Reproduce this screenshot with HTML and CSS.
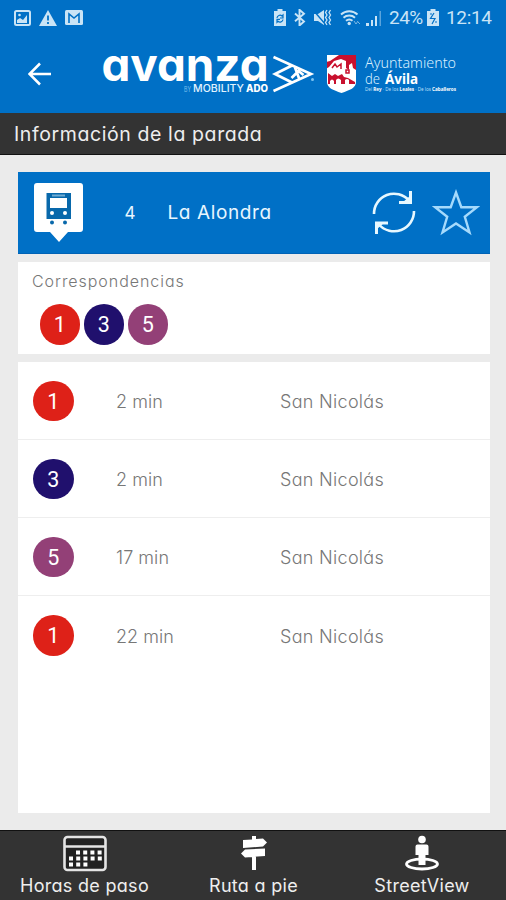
FILE: index.html
```html
<!DOCTYPE html>
<html lang="es">
<head>
<meta charset="utf-8">
<title>Información de la parada</title>
<link rel="stylesheet" href="styles.css">
</head>
<body>
<div class="app">
  <header class="top">
    <div class="status">
      <div class="status-left">
        <svg width="17" height="16" viewBox="0 0 17 16"><rect x="1" y="1" width="15" height="14" rx="1.5" fill="none" stroke="currentColor" stroke-width="2"/><path d="M3 13V10l3-2 3 2 4-5v8z" fill="currentColor"/><circle cx="5.5" cy="5" r="1.3" fill="currentColor"/></svg>
        <svg width="18" height="16" viewBox="0 0 18 16"><path d="M9 0l9 16H0z" fill="currentColor"/><path d="M9 5.5v5M9 12v2" stroke="#0070c6" stroke-width="1.8"/></svg>
        <svg width="18" height="15" viewBox="0 0 18 15"><rect x="0" y="0" width="18" height="15" rx="1.5" fill="currentColor"/><path d="M4 13V4l5 4 5-4v9" fill="none" stroke="#0070c6" stroke-width="1.6"/></svg>
      </div>
      <div class="status-right">
        <svg width="12" height="17" viewBox="0 0 12 17"><path d="M3.5 0h5v2H12v15H0V2h3.500z" fill="currentColor"/><path d="M3 9a3 3 0 0 1 5-2l1-1v3H6M9 10.500a3 3 0 0 1-5 1.800l-1 1v-3h3" fill="none" stroke="#0070c6" stroke-width="1.2"/></svg>
        <svg class="bt" width="12" height="17" viewBox="0 0 12 17"><path d="M1 4.500l9 8-4.500 4V.8L10 4.700l-9 7.500" fill="none" stroke="currentColor" stroke-width="1.900"/></svg>
        <svg class="mute" width="19" height="17" viewBox="0 0 19 17"><path d="M1 5h4l6-4v15l-6-4H1z" fill="currentColor"/><path d="M0 1l13 15" stroke="#0070c6" stroke-width="1.400"/><path d="M14 1l-1.500 2.500L14 6l-1.500 2.500L14 11l-1.500 2.500L14 16M17.500 1L16 3.500 17.500 6 16 8.500l1.500 2.500-1.500 2.500 1.500 2.500" fill="none" stroke="currentColor" stroke-width="1.300"/></svg>
        <svg class="wifi" width="21" height="17" viewBox="0 0 21 17"><path d="M1 5.500a12 12 0 0 1 16.500 0M3.500 8.800a8.500 8.500 0 0 1 11.500 0M6 11.800a5 5 0 0 1 6.500 0" fill="none" stroke="currentColor" stroke-width="1.900"/><circle cx="9.200" cy="14.500" r="1.700" fill="currentColor"/><path d="M14 12l2 3 2-3M18 13l2 2" fill="none" stroke="currentColor" stroke-width="1" opacity=".6"/></svg>
        <svg class="signal" width="17" height="16" viewBox="0 0 17 16"><path d="M1 16v-3h3v3zM6 16v-6h2v6zM10 16V6h2v10z" fill="currentColor"/><path d="M14.500 16V1H16v15z" fill="currentColor" opacity=".45"/></svg>
        <span class="pct">24%</span>
        <svg class="bat" width="12" height="17" viewBox="0 0 12 17"><path d="M3.500 0h5v2H12v15H0V2h3.500z" fill="currentColor"/><path d="M7 4L3.500 9.500H8L5 15M3 5h2M8 13h2" fill="none" stroke="#0070c6" stroke-width="1.200"/></svg>
        <span class="clock">12:14</span>
      </div>
    </div>
    <div class="brandbar">
      <svg class="back" width="24" height="24" viewBox="0 0 24 24"><path d="M23 12H2M12 1.500L1.500 12 12 22.500" fill="none" stroke="#fff" stroke-width="2.500"/></svg>
      <svg class="avanza" width="214" height="64" viewBox="0 -14 214 64">
        <text class="wordmark" x="-.5" y="31.500" textLength="167" lengthAdjust="spacingAndGlyphs">avanza</text>
        <text class="by" x="82" y="43" textLength="7" lengthAdjust="spacingAndGlyphs">BY</text>
        <text class="mobility" x="91" y="43" textLength="51" lengthAdjust="spacingAndGlyphs">MOBILITY</text>
        <text class="ado" x="144" y="43" textLength="22" lengthAdjust="spacingAndGlyphs">ADO</text>
        <path d="M171.500 8L209 25 171.500 42M190 16.500L173 25l17 8.500M193 18.500l4.500 12M189.500 29l7-7 5 4" fill="none" stroke="#fff" stroke-width="2.700"/>
        <circle cx="210.500" cy="30.500" r="1.500" fill="#7dc4f2"/>
      </svg>
      <svg class="city" width="134" height="52" viewBox="0 -10 134 52">
        <path d="M0 0h29v27c0 6-6 8-14.500 11C6 35 0 33 0 27z" fill="#fff"/>
        <path d="M12 0h17v15l-3-2-1-5-3 2v5l-3-2V6l-5-2-7 2-5 6-3 2V7l4-1z" fill="#c8102e"/>
        <path d="M1 18l4 3 3-2 3 2 4-2 2 3 4 1 7 4v2h-6v-4q-2-2-4 0v4h-4v-4q-3-3-5 0v4H7v-3q-2-3-4 0v3H1z" fill="#c8102e"/>
        <path d="M5 13l3-4 2 3 4-3v5M19 15h3v3h-3z" fill="none" stroke="#c8102e" stroke-width="1.500"/>
        <text class="city-name" x="38" y="13" textLength="91" lengthAdjust="spacingAndGlyphs">Ayuntamiento</text>
        <text class="city-name" x="38" y="28.500" textLength="15" lengthAdjust="spacingAndGlyphs">de</text>
        <text class="city-name strong" x="58" y="28.500" textLength="33" lengthAdjust="spacingAndGlyphs">Ávila</text>
        <text class="motto" x="38" y="36" textLength="91" lengthAdjust="spacingAndGlyphs">Del <tspan class="strong">Rey</tspan> · De los <tspan class="strong">Leales</tspan> · De los <tspan class="strong">Caballeros</tspan></text>
      </svg>
    </div>
  </header>
  <h1 class="title">Información de la parada</h1>
  <main class="content">
    <section class="stop">
      <svg class="pin" width="50" height="60" viewBox="0 0 50 60"><path d="M3 0h43q3 0 3 3v43q0 3-3 3H34l-9 10-9-10H3q-3 0-3-3V3q0-3 3-3z" fill="#fff"/><path d="M12.500 10h24.500v26H12.500z" fill="#0868ab"/><path d="M18 11.500h13v2H18z" fill="#73acd2"/><path d="M16 15h17v10H16z" fill="#fff"/><circle cx="18" cy="30" r="2" fill="#fff"/><circle cx="31" cy="30" r="2" fill="#fff"/><circle cx="18" cy="39.500" r="2" fill="#0868ab"/><circle cx="31" cy="39.500" r="2" fill="#0868ab"/></svg>
      <span class="stop-id">4</span>
      <span class="stop-name">La Alondra</span>
      <svg class="refresh" width="44" height="46" viewBox="0 0 44 46"><path d="M2 24A20 20 0 0 1 37 10.500M42 21A20 20 0 0 1 7 34.500" fill="none" stroke="#e7f8ff" stroke-width="2.600"/><path d="M38.500 1v11.500H27M4.500 44V33H16" fill="none" stroke="#e7f8ff" stroke-width="3"/><path d="M31 12l7-6v6zM12 33l-7 6v-6z" fill="#e7f8ff"/></svg>
      <svg class="star" width="48" height="47" viewBox="0 0 48 47"><path d="M24 3.500l5.300 14.700H45L32.800 27.800 37.500 43.500 24 34.500 10.500 43.500 15.200 27.800 3 18.200h15.700z" fill="none" stroke="#a5dafc" stroke-width="2.400"/></svg>
    </section>
    <section class="transfers">
      <h2 class="label">Correspondencias</h2>
      <div class="lines"><span class="line red">1</span><span class="line navy">3</span><span class="line purple">5</span></div>
    </section>
    <section class="arrivals">
      <div class="row"><span class="line red">1</span><span class="time">2 min</span><span class="dest">San Nicolás</span></div>
      <div class="row"><span class="line navy">3</span><span class="time">2 min</span><span class="dest">San Nicolás</span></div>
      <div class="row"><span class="line purple">5</span><span class="time">17 min</span><span class="dest">San Nicolás</span></div>
      <div class="row"><span class="line red">1</span><span class="time">22 min</span><span class="dest">San Nicolás</span></div>
    </section>
  </main>
  <nav class="tabs">
    <a class="tab hours">
      <svg width="44" height="38" viewBox="0 0 44 38"><rect x="1.500" y="2" width="41" height="33" rx="3" fill="#222" stroke="#e4e4e4" stroke-width="2.600"/><path d="M2 11.500h40" stroke="#e4e4e4" stroke-width="2.600"/><path d="M13 17.500h26M6 23.500h33M6 29.500h20" stroke="#fff" stroke-width="4" stroke-dasharray="4 3.200"/></svg>
      <span>Horas de paso</span>
    </a>
    <a class="tab walk">
      <svg width="28" height="38" viewBox="0 0 28 38"><path d="M12 1h4v3l7-.5 4 4-4 4L3 13V5l9-.5zM25 13.500V21L5 22.500l-4-4 4-4zM12 21h4v14h-4z" fill="#fff"/></svg>
      <span>Ruta a pie</span>
    </a>
    <a class="tab street">
      <svg width="38" height="38" viewBox="0 0 38 38"><ellipse cx="19" cy="29" rx="15.500" ry="5" fill="none" stroke="#fff" stroke-width="2.800"/><circle cx="19" cy="4.500" r="3.800" fill="#fff"/><path d="M14.500 9.500h9q2 0 2 2V20h-3v10h-7V20h-3v-8.500q0-2 2-2z" fill="#fff"/></svg>
      <span>StreetView</span>
    </a>
  </nav>
</div>
</body>
</html>
```

FILE: styles.css
```css
* { box-sizing: border-box; }
body { margin: 0; font-family: Inter, "Liberation Sans", sans-serif; font-feature-settings: "cv11" 1; }
svg { display: block; flex: none; }
h1, h2 { margin: 0; font-weight: 400; }
.app { width: 506px; height: 900px; display: flex; flex-direction: column; background: #ebebeb; overflow: hidden; }
.top { height: 113px; flex: none; background: #0070c6; }
.status { height: 35px; padding: 0 14px; display: flex; justify-content: space-between; align-items: center; color: #c9e4f6; }
.status-left { display: flex; gap: 8px; align-items: center; }
.status-right { display: flex; align-items: center; font: 19px/35px Roboto, sans-serif; white-space: nowrap; }
.bt { margin-left: 8px; }
.mute { margin-left: 7px; }
.wifi { margin-left: 8px; }
.signal { margin-left: 4px; }
.pct { margin-left: 7px; width: 33px; letter-spacing: -.5px; }
.bat { margin-left: 5px; }
.clock { margin-left: 7px; width: 46px; letter-spacing: -.35px; }
.brandbar { height: 78px; display: flex; align-items: flex-start; }
.back { margin: 27px 0 0 28px; }
.avanza { margin: 0 0 0 50px; }
.city { margin: 10px 0 0 11px; }
.wordmark { font-size: 45px; font-weight: 750; fill: #fff; }
.by { font-size: 7px; fill: #7dc0ee; }
.mobility { font-size: 10px; font-weight: 500; fill: #e2f3ff; }
.ado { font-size: 10px; font-weight: 800; fill: #fff; }
.city-name { font-family: "Noto Sans", sans-serif; font-size: 14.500px; font-weight: 300; fill: #d8efff; }
.motto { font-family: "Noto Sans", sans-serif; font-size: 5px; fill: #b9dff8; }
.strong { font-weight: 700; fill: #fff; }
.title { height: 42px; flex: none; padding: 1px 0 0 14px; background: #333; border-bottom: 1px solid #111; color: #eee; font-size: 19.500px; line-height: 41px; letter-spacing: .6px; }
.content { flex: 1; padding: 17px 16px 17px 17.500px; display: flex; flex-direction: column; }
.stop { height: 81.500px; flex: none; display: flex; align-items: flex-start; background: #0070c6; color: #e7f6ff; border-bottom: 1px solid #0062b5; }
.pin { margin: 11px 0 0 16px; }
.stop-id { width: 43px; margin-left: 41px; line-height: 82px; font-size: 17px; }
.stop-name { width: 204px; line-height: 82px; font-size: 19px; letter-spacing: .6px; }
.refresh { margin-top: 18px; }
.star { margin: 17px 0 0 16px; }
.transfers { height: 92px; flex: none; margin-top: 8.500px; padding: 9px 14.500px; background: #fff; }
.label { font-size: 16px; line-height: 20px; color: #777; font-weight: 300; letter-spacing: .95px; }
.lines { display: flex; gap: 3.500px; padding: 13px 7.500px 0; }
.line { width: 40.500px; height: 40.500px; border-radius: 50%; color: #fff; font: 21.500px/42.500px Roboto, sans-serif; text-align: center; }
.red { background: #de2118; }
.navy { background: #20106d; }
.purple { background: #934077; }
.arrivals { flex: 1; margin-top: 8px; background: #fff; }
.row { height: 78px; display: grid; grid-template-columns: 83px 164px 1fr; align-items: center; padding: 1px 0 0 15.500px; border-bottom: 1px solid #eee; color: #777; font-size: 18px; font-weight: 300; letter-spacing: .3px; }
.row:last-child { border-bottom: 0; }
.row .line { letter-spacing: 0; }
.time { letter-spacing: .05px; }
.time, .dest { padding-top: 1px; }
.tabs { height: 70px; flex: none; display: grid; grid-template-columns: 169px 169px 168px; background: #333; border-top: 1px solid #111; color: #eee; font-size: 18px; }
.tab { display: flex; flex-direction: column; align-items: center; padding-top: 4px; line-height: 25px; letter-spacing: .3px; white-space: nowrap; }
```
